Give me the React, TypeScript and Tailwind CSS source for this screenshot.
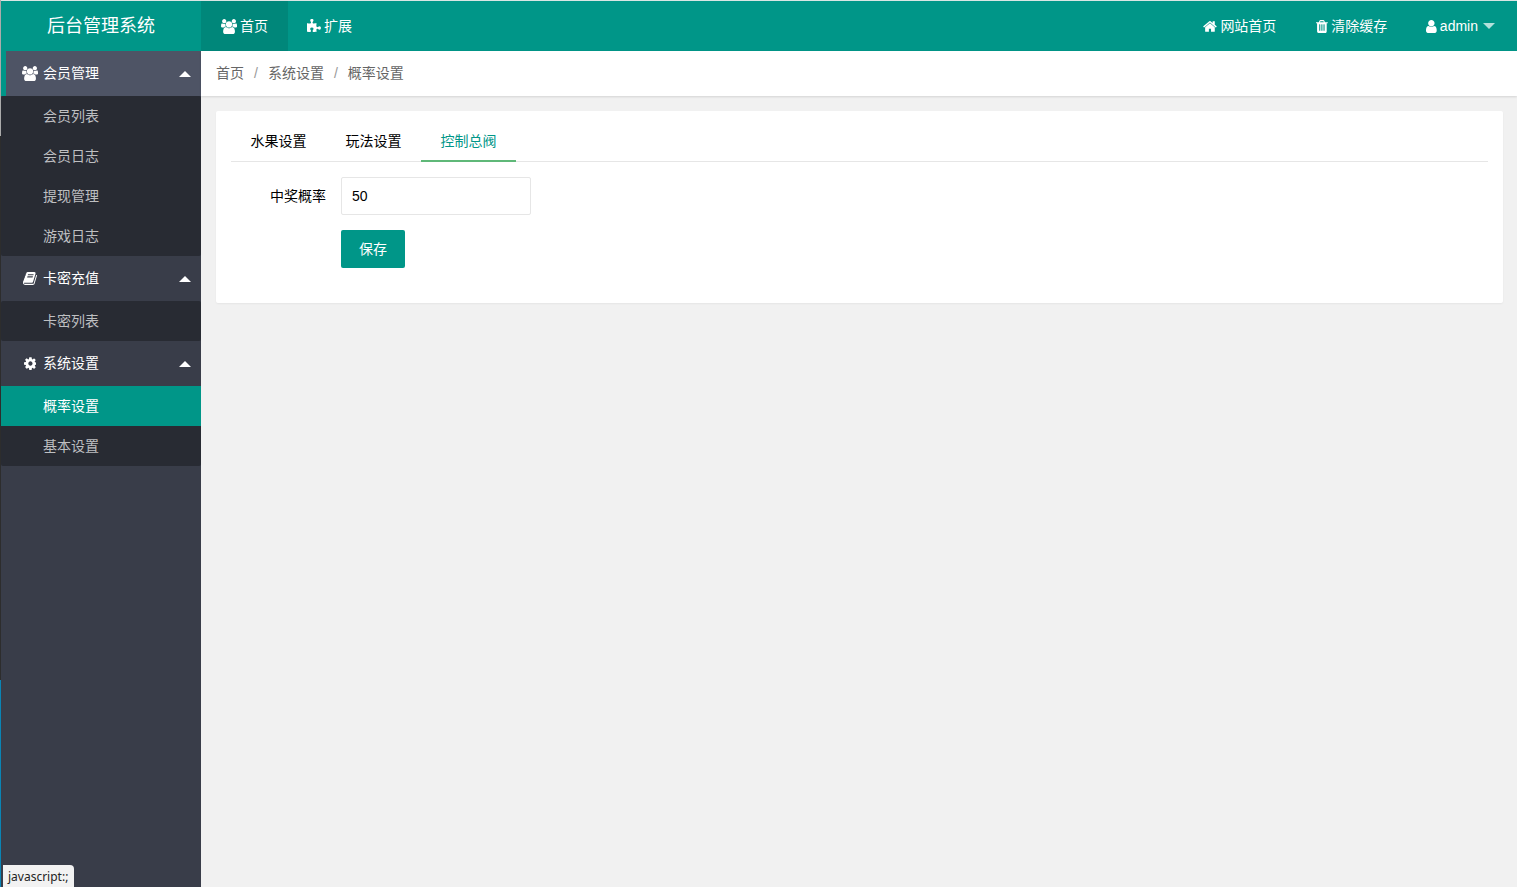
import { useState } from "react";

const icons = {
  home: {
    box: "0 0 1664 1792",
    d: "M1408 992v480q0 26-19 45t-45 19H960v-384H704v384H320q-26 0-45-19t-19-45V992q0-1 .5-3t.5-3l575-474 575 474q1 2 1 6zm223-69l-62 74q-8 9-21 11h-3q-13 0-21-7L832 424l-692 577q-12 8-24 7-13-2-21-11l-62-74q-8-10-7-23.5t11-21.5l719-599q32-26 76-26t76 26l244 204V288q0-14 9-23t23-9h192q14 0 23 9t9 23v408l219 182q10 8 11 21.5t-7 23.5z",
  },
  users: {
    box: "0 0 1920 1792",
    d: "M593 896q-162 5-265 128H194q-82 0-138-40.5T0 865q0-353 124-353 6 0 43.5 21t97.5 42.5T384 597q67 0 133-23-5 37-5 66 0 139 81 256zm1071 637q0 120-73 189.5t-194 69.5H523q-121 0-194-69.5T256 1533q0-53 3.5-103.5t14-109T300 1212t43-97.5 62-81 85.5-53.5T602 960q10 0 43 21.5t73 48 107 48 135 21.5 135-21.5 107-48 73-48 43-21.5q61 0 111.5 20t85.5 53.5 62 81 43 97.5 26.5 108.5 14 109 3.5 103.5zM640 256q0 106-75 181t-181 75-181-75-75-181 75-181T384 0t181 75 75 181zm704 384q0 159-112.5 271.5T960 1024 688.5 911.5 576 640t112.5-271.5T960 256t271.5 112.5T1344 640zm576 225q0 78-56 118.5t-138 40.5h-134q-103-123-265-128 81-117 81-256 0-29-5-66 66 23 133 23 59 0 119-21.5t97.5-42.5 43.5-21q124 0 124 353zm-128-609q0 106-75 181t-181 75-181-75-75-181 75-181 181-75 181 75 75 181z",
  },
  puzzle: {
    box: "91 0 1664 1792",
    d: "M1755 1082q0 81-44.5 135t-123.5 54q-41 0-77.5-17.5t-59-38-56.5-38-71-17.5q-110 0-110 124 0 39 16 115t15 115v5q-22 0-33 1-34 3-97.5 11.5t-115.5 13.5-98 5q-61 0-103-26.5t-42-83.5q0-37 17.5-71t38-56.5 38-59 17.5-77.5q0-79-54-123.5t-135-44.5q-84 0-143 45.5t-59 127.5q0 43 15 83t33.5 64.5 33.5 53 15 50.5q0 45-46 89-37 35-117 35-95 0-245-24-9-2-27.5-4t-27.5-4l-13-2q-1 0-3-1-2 0-2-1v-1024q2 1 17.5 3.5t34 5 21.5 3.5q150 24 245 24 80 0 117-35 46-44 46-89 0-22-15-50.5t-33.5-53-33.5-64.5-15-83q0-82 59-127.5t144-45.5q80 0 134 44.5t54 123.5q0 41-17.5 77.5t-38 59-38 56.5-17.5 71q0 57 42 83.5t103 26.5q64 0 180-15t163-17v2q-1 2-3.5 17.5t-5 34-3.5 21.5q-24 150-24 245 0 80 35 117 44 46 89 46 22 0 50.5-15t53-33.5 64.5-33.5 83-15q82 0 127.5 59t45.5 143z",
  },
  book: {
    box: "64 0 1664 1792",
    d: "M1703 478q40 57 18 129l-275 906q-19 64-76.5 107.5T1247 1664H324q-77 0-148.5-53.5T76 1479q-24-67-2-127 0-4 3-27t4-37q1-8-3-21.5t-3-19.5q2-11 8-21t16.5-23.5T116 1179q23-38 45-91.5t30-91.5q3-10 .5-30t-.5-28q3-11 17-28t17-23q21-36 42-92t25-90q1-9-2.5-32t.5-28q4-13 22-30.5t22-22.5q19-26 42.5-84.5T404 411q1-8-3-25.5t-2-26.5q2-8 9-18t18-23 17-21q8-12 16.5-30.5t15-35 16-36 19.5-32T533.5 140t36-11.5T617 134l-1 3q38-9 51-9h761q74 0 114 56t18 130l-274 906q-36 119-71.5 153.5T1087 1408H218q-27 0-38 15-11 16-1 43 24 70 144 70h923q29 0 56-15.5t35-41.5l300-987q7-22 5-57 38 15 59 43zm-1064 2q-4 13 2 22.5t20 9.5h608q13 0 25.5-9.5T1311 480l21-64q4-13-2-22.5t-20-9.5H702q-13 0-25.5 9.5T660 416zm-83 256q-4 13 2 22.5t20 9.5h608q13 0 25.5-9.5T1228 736l21-64q4-13-2-22.5t-20-9.5H619q-13 0-25.5 9.5T577 672z",
  },
  cog: {
    box: "128 0 1536 1792",
    d: "M1152 896q0-106-75-181t-181-75-181 75-75 181 75 181 181 75 181-75 75-181zm512-109v222q0 12-8 23t-20 13l-185 28q-19 54-39 91 35 50 107 138 10 12 10 25t-9 23q-27 37-99 108t-94 71q-12 0-26-9l-138-108q-44 23-91 38-16 136-29 186-7 28-36 28H785q-14 0-24.5-8.5T749 1634l-28-184q-49-16-90-37l-141 107q-10 9-25 9-14 0-25-11-126-114-165-168-7-10-7-23 0-12 8-23 15-21 51-66.5t54-70.5q-27-50-41-99l-183-27q-13-2-21-12.5t-8-23.5V785q0-12 8-23t19-13l186-28q14-46 39-92-40-57-107-138-10-12-10-24 0-10 9-23 26-36 98.5-107.5T465 288q13 0 26 10l138 107q44-23 91-38 16-136 29-186 7-28 36-28h222q14 0 24.5 8.5T1043 182l28 184q49 16 90 37l142-107q9-9 24-9 13 0 25 10 129 119 165 170 7 8 7 22 0 12-8 23-15 21-51 66.5t-54 70.5q26 50 41 98l183 28q13 2 21 12.5t8 23.5z",
  },
  trash: {
    box: "192 0 1408 1792",
    d: "M704 1376V672q0-14-9-23t-23-9h-64q-14 0-23 9t-9 23v704q0 14 9 23t23 9h64q14 0 23-9t9-23zm256 0V672q0-14-9-23t-23-9h-64q-14 0-23 9t-9 23v704q0 14 9 23t23 9h64q14 0 23-9t9-23zm256 0V672q0-14-9-23t-23-9h-64q-14 0-23 9t-9 23v704q0 14 9 23t23 9h64q14 0 23-9t9-23zm-544-992h448l-48-117q-7-9-17-11H738q-10 2-17 11zm928 32v64q0 14-9 23t-23 9h-96v948q0 83-47 143.5t-113 60.5H480q-66 0-113-58.5T320 1464V512h-96q-14 0-23-9t-9-23v-64q0-14 9-23t23-9h309l70-167q15-37 54-63t79-26h320q40 0 79 26t54 63l70 167h309q14 0 23 9t9 23z",
  },
  user: {
    box: "256 0 1280 1792",
    d: "M1536 1399q0 109-62.5 187t-150.5 78H469q-88 0-150.5-78T256 1399q0-85 8.5-160.5t31.5-152 58.5-131 94-89T583 832q131 128 313 128t313-128q76 0 134.5 34.5t94 89 58.5 131 31.5 152 8.5 160.5zm-256-887q0 159-112.5 271.5T896 896 624.5 783.5 512 512t112.5-271.5T896 128t271.5 112.5T1280 512z",
  },
};

type IconName = keyof typeof icons;

const Icon = ({ name }: { name: IconName }) => (
  <svg viewBox={icons[name].box} className="h-[15px] w-auto shrink-0 fill-current" aria-hidden="true">
    <path d={icons[name].d} />
  </svg>
);

const menu: { title: string; icon: IconName; children: string[] }[] = [
  { title: "会员管理", icon: "users", children: ["会员列表", "会员日志", "提现管理", "游戏日志"] },
  { title: "卡密充值", icon: "book", children: ["卡密列表"] },
  { title: "系统设置", icon: "cog", children: ["概率设置", "基本设置"] },
];

const tabs = ["水果设置", "玩法设置", "控制总阀"];

const Header = () => (
  <header className="flex h-[50px] items-stretch bg-[#009688] text-white">
    <h1 className="flex w-[200px] items-center justify-center text-lg">后台管理系统</h1>
    <nav className="flex">
      <a href="#" className="flex items-center gap-[3px] bg-[#00877a] px-5">
        <Icon name="users" />
        首页
      </a>
      <a href="#" className="flex items-center gap-[3px] px-[19px]">
        <Icon name="puzzle" />
        扩展
      </a>
    </nav>
    <nav className="ml-auto flex">
      <a href="#" className="flex items-center gap-[3px] px-5">
        <Icon name="home" />
        网站首页
      </a>
      <a href="#" className="flex items-center gap-[3px] px-5">
        <Icon name="trash" />
        清除缓存
      </a>
      <a href="#" className="flex items-center gap-[3px] pr-[22px] pl-[19px]">
        <Icon name="user" />
        admin
        <span className="ml-0.5 border-x-[6px] border-t-[6px] border-x-transparent border-t-white/70" />
      </a>
    </nav>
  </header>
);

const Sidebar = () => {
  const [closed, setClosed] = useState<string[]>([]);

  const toggle = (title: string) => {
    setClosed(closed.includes(title) ? closed.filter((t) => t !== title) : [...closed, title]);
  };

  return (
    <aside className="w-[200px] shrink-0 bg-[#393d49]">
      {menu.map((group, i) => (
        <div key={group.title}>
          <button
            type="button"
            onClick={() => toggle(group.title)}
            className={
              i === 0
                ? "flex h-[45px] w-full items-center border-l-[5px] border-[#009688] bg-[#4e5465] pr-2.5 pb-px pl-[15px] text-white"
                : "flex h-[45px] w-full items-center pr-2.5 pb-px pl-5 text-white"
            }
          >
            <span className="mr-1 flex w-[18px] justify-center">
              <Icon name={group.icon} />
            </span>
            {group.title}
            <span
              className={
                closed.includes(group.title)
                  ? "mt-px ml-auto border-x-[6px] border-t-[6px] border-x-transparent border-t-white"
                  : "mt-px ml-auto border-x-[6px] border-b-[6px] border-x-transparent border-b-white"
              }
            />
          </button>
          {!closed.includes(group.title) && (
            <ul className="rounded-xs bg-[#282b33]">
              {group.children.map((item) => (
                <li key={item}>
                  <a
                    href="#"
                    className={
                      item === "概率设置"
                        ? "flex h-10 items-center bg-[#009688] pl-[42px] text-white"
                        : "flex h-10 items-center pl-[42px] text-[#bebfc1]"
                    }
                  >
                    {item}
                  </a>
                </li>
              ))}
            </ul>
          )}
        </div>
      ))}
    </aside>
  );
};

const SettingsCard = () => {
  const [active, setActive] = useState("控制总阀");
  const [rate, setRate] = useState("50");

  return (
    <section className="rounded-xs bg-white px-[15px] pt-2.5 pb-5 shadow-[0_1px_2px_rgba(0,0,0,0.05)]">
      <div role="tablist" className="flex h-[41px] border-b border-[#e6e6e6]">
        {tabs.map((tab) => (
          <button
            key={tab}
            type="button"
            role="tab"
            aria-selected={tab === active}
            onClick={() => setActive(tab)}
            className={
              tab === active
                ? "-mb-px h-[41px] w-[95px] border-b-2 border-[#5fb878] text-[#009688]"
                : "h-10 w-[95px] text-black"
            }
          >
            {tab}
          </button>
        ))}
      </div>
      <form className="pt-[15px]" onSubmit={(e) => e.preventDefault()}>
        <div className="mb-[15px] flex items-center">
          <label htmlFor="rate" className="w-[110px] px-[15px] text-right text-black">
            中奖概率
          </label>
          <input
            id="rate"
            type="text"
            value={rate}
            onChange={(e) => setRate(e.target.value)}
            className="h-[38px] w-[190px] rounded-xs border border-[#e6e6e6] bg-white px-2.5 text-black outline-none"
          />
        </div>
        <div className="mb-[15px] pl-[110px]">
          <button type="submit" className="block h-[38px] rounded-xs bg-[#009688] px-[18px] text-white">
            保存
          </button>
        </div>
      </form>
    </section>
  );
};

const App = () => {
  return (
    <div className="flex min-h-screen bg-[#f1f1f1] font-['Liberation_Sans','Noto_Sans_CJK_SC',sans-serif] text-sm text-[#666]">
      {/* window edge */}
      <div className="flex w-px shrink-0 flex-col bg-[#0a84b4]">
        <div className="h-[136px] bg-[#ababab]" />
        <div className="h-[544px] bg-[#2d2d2d]" />
      </div>

      <div className="flex min-w-0 grow flex-col border-t border-[#d9e6e4]">
        <Header />
        <div className="flex grow">
          <Sidebar />
          <main className="min-w-0 grow">
            <nav className="flex h-[45px] items-center gap-2.5 bg-white px-[15px] pb-px shadow-[0_1px_2px_rgba(0,0,0,0.12)]">
              <a href="#">首页</a>
              <span className="text-[#999]">/</span>
              <a href="#">系统设置</a>
              <span className="text-[#999]">/</span>
              <span>概率设置</span>
            </nav>
            <div className="py-[15px] pr-3.5 pl-[15px]">
              <SettingsCard />
            </div>
          </main>
        </div>
      </div>

      <div className="fixed bottom-0 left-[3px] flex h-[22px] items-center rounded-tr bg-[#f2f2f2] pt-0.5 pr-1.5 pl-[5px] font-['Noto_Sans',sans-serif] text-xs text-[#222]">
        javascript:;
      </div>
    </div>
  );
};

export default App;
